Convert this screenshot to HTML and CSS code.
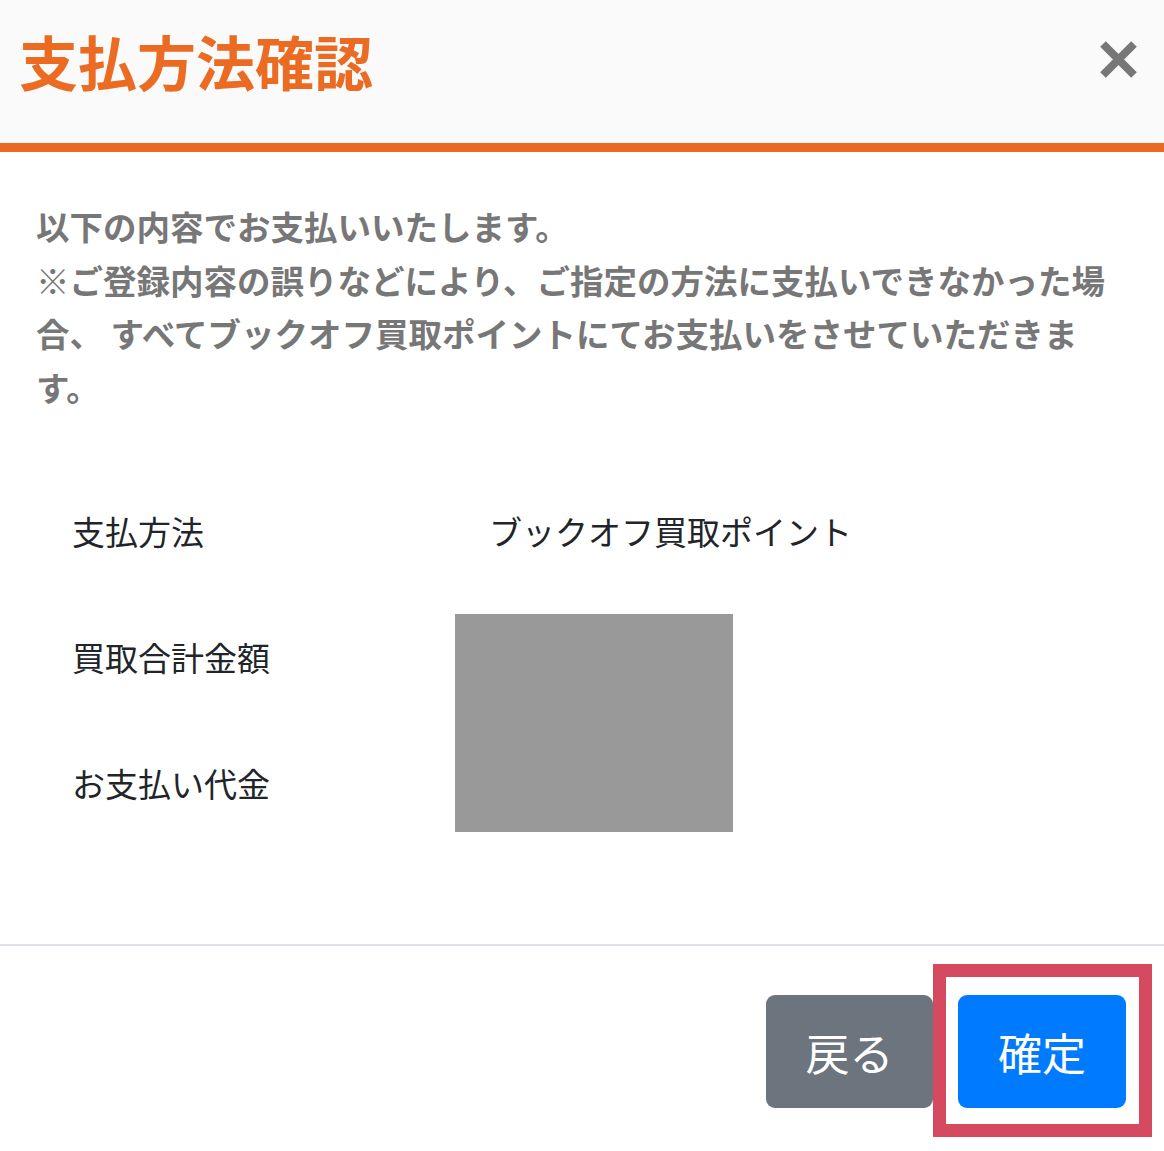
FILE: index.html
```html
<!DOCTYPE html>
<html lang="ja">
<head>
<meta charset="utf-8">
<title>支払方法確認</title>
<link rel="stylesheet" href="styles.css">
</head>
<body>
<div class="modal">
  <header class="modal-header">
    <h1 class="modal-title">支払方法確認</h1>
    <button class="close" type="button" aria-label="閉じる">
      <svg width="37" height="37" viewBox="0 0 37 37"><path d="M3 3 L34 34 M34 3 L3 34" stroke="#777" stroke-width="8" fill="none"/></svg>
    </button>
  </header>
  <div class="modal-body">
    <p class="notice">以下の内容でお支払いいたします。<br>※ご登録内容の誤りなどにより、ご指定の方法に支払いできなかった場合、 すべてブックオフ買取ポイントにてお支払いをさせていただきます。</p>
    <div class="summary">
      <div class="row"><div class="label">支払方法</div><div class="value">ブックオフ買取ポイント</div></div>
      <div class="row"><div class="label">買取合計金額</div><div class="value"></div></div>
      <div class="row"><div class="label">お支払い代金</div><div class="value"></div></div>
      <div class="redact"></div>
    </div>
  </div>
  <footer class="modal-footer">
    <button class="btn btn-secondary" type="button">戻る</button>
    <span class="highlight-wrap">
      <button class="btn btn-primary" type="button">確定</button>
      <span class="highlight"></span>
    </span>
  </footer>
</div>
</body>
</html>
```

FILE: styles.css
```css
html, body {
  margin: 0;
  padding: 0;
  background: #fff;
}
body {
  font-family: "Noto Sans CJK JP", "Noto Sans", sans-serif;
  width: 1164px;
  height: 1151px;
  overflow: hidden;
}
.modal {
  display: flex;
  flex-direction: column;
}
.modal-header {
  height: 143px;
  box-sizing: content-box;
  background: #fafafa;
  border-bottom: 9px solid #eb6a21;
  display: flex;
  align-items: center;
  justify-content: space-between;
  padding: 0 27px 0 19px;
}
.modal-title {
  margin: 0 0 23px 0;
  font-size: 59px;
  line-height: 59px;
  font-weight: 700;
  color: #ec6b22;
}
.close {
  border: 0;
  background: none;
  padding: 0;
  margin: 0 0 25px 0;
  width: 37px;
  height: 37px;
  display: flex;
}
.modal-body {
  padding: 47px 36px 98px 36px;
}
.notice {
  margin: 0;
  font-size: 33.5px;
  line-height: 53.5px;
  font-weight: 700;
  color: #777;
}
.summary {
  position: relative;
  margin-top: 55px;
}
.row {
  display: flex;
  height: 126px;
  align-items: center;
  font-size: 33px;
  line-height: 40px;
  color: #212529;
}
.label {
  width: 383px;
  padding-left: 36px;
}
.value {
  padding-left: 34px;
}
.redact {
  position: absolute;
  left: 419px;
  top: 146px;
  width: 278px;
  height: 218px;
  background: #999;
}
.modal-footer {
  border-top: 2px solid #dee2e6;
  display: flex;
  justify-content: flex-end;
  gap: 25px;
  padding: 49px 38px 43px 0;
}
.btn {
  height: 113px;
  border: 0;
  border-radius: 9px;
  color: #fff;
  font-family: "Noto Sans CJK JP", "Noto Sans", sans-serif;
  font-size: 44px;
  padding: 0;
}
.btn-secondary {
  width: 167px;
  background: #6c757d;
}
.btn-primary {
  width: 168px;
  background: #007bff;
  display: block;
}
.highlight-wrap {
  position: relative;
  display: block;
}
.highlight {
  position: absolute;
  left: -25px;
  top: -31px;
  right: -26px;
  bottom: -29px;
  border: 13px solid #d64a5f;
}
```
